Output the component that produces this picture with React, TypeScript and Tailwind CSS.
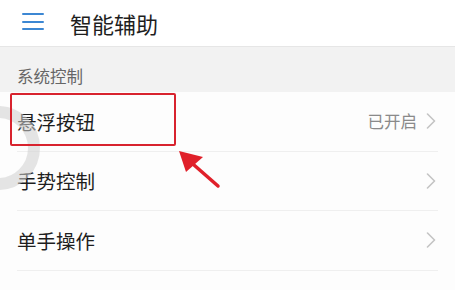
import React from 'react';

const rows = [
  { label: '悬浮按钮', value: '已开启' },
  { label: '手势控制', value: '' },
  { label: '单手操作', value: '' },
];

function Chevron() {
  return (
    <svg width="10" height="16" viewBox="0 0 10 16" fill="none">
      <path d="M1.5 1 L8.5 8 L1.5 15" stroke="#c4c4c4" strokeWidth="1.6" strokeLinecap="round" strokeLinejoin="round" />
    </svg>
  );
}

export default function App() {
  return (
    <div
      className="relative w-[455px] h-[290px] overflow-hidden bg-[#fdfdfd]"
      style={{ fontFamily: '"Noto Sans CJK SC", "Noto Sans", sans-serif' }}
    >
      {/* header */}
      <div className="h-[47px] flex items-center bg-white border-b border-[#e6e6e6] shadow-[0_1px_2px_rgba(0,0,0,0.06)]">
        <div className="ml-[22px] w-[22px] flex flex-col gap-[5.5px] -mt-[3px]">
          <span className="block h-[2px] bg-[#3c87d3] rounded" />
          <span className="block h-[2px] bg-[#3c87d3] rounded" />
          <span className="block h-[2px] bg-[#3c87d3] rounded" />
        </div>
        <div className="ml-[26px] text-[22px] text-[#1e1e1e] leading-none">智能辅助</div>
      </div>

      {/* section */}
      <div className="h-[45px] bg-[#f2f2f2] flex items-end pl-[17px] pb-[8px]">
        <span className="text-[16.5px] text-[#666] leading-none">系统控制</span>
      </div>

      {/* list */}
      <div className="px-[17px]">
        {rows.map(r => (
          <div key={r.label} className="h-[59.5px] flex items-center border-b border-[#efefef]">
            <span className="flex-1 text-[19.5px] text-[#1e1e1e] leading-none">{r.label}</span>
            {r.value && <span className="mr-[9px] text-[16.5px] text-[#8a8a8a] leading-none">{r.value}</span>}
            <span className="mr-[2px] flex items-center"><Chevron /></span>
          </div>
        ))}
      </div>

      {/* floating button ring */}
      <div className="absolute left-[-44px] top-[106px] w-[84px] h-[84px] rounded-full border-[12px] border-[#cfcfcf] opacity-55" />

      {/* annotation box */}
      <div className="absolute left-[10px] top-[93px] w-[166px] h-[53px] border-[2.5px] border-[#d8232e] rounded-[2px]" />

      {/* annotation arrow */}
      <svg className="absolute left-[170px] top-[140px]" width="60" height="55" viewBox="0 0 60 55">
        <path d="M48 46 L24 25" stroke="#e0202a" strokeWidth="3.5" strokeLinecap="round" />
        <path d="M9 11 L33 17 L16 32 Z" fill="#e0202a" />
      </svg>
    </div>
  );
}
